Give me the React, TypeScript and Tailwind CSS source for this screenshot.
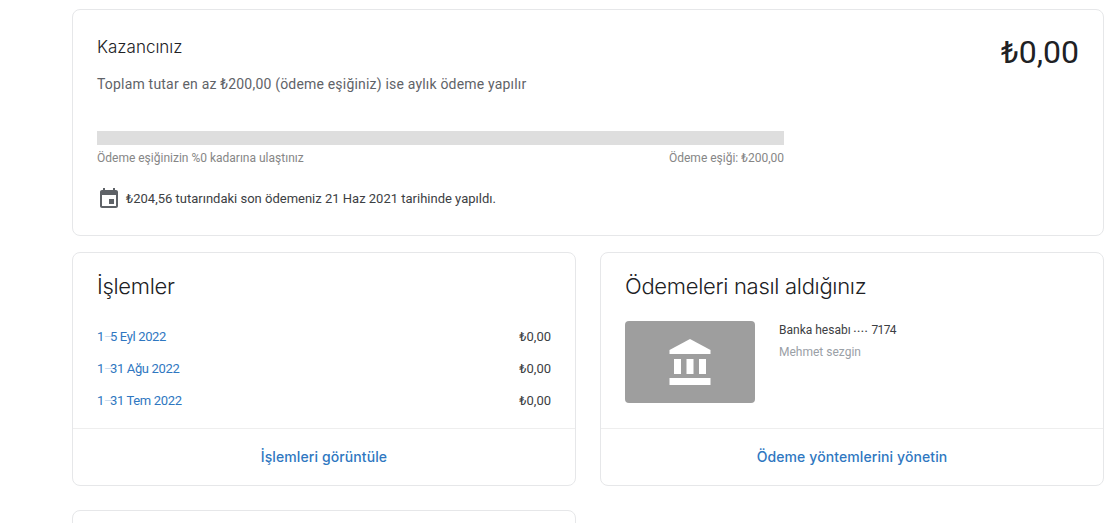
const rows = [
  { start: "1", rest: "5 Eyl 2022", amount: "₺0,00" },
  { start: "1", rest: "31 Ağu 2022", amount: "₺0,00" },
  { start: "1", rest: "31 Tem 2022", amount: "₺0,00" },
];

function CalendarIcon() {
  return (
    <svg viewBox="0 0 24 24" className="h-6 w-6 shrink-0" fill="#5f6368">
      <path d="M17 12h-5v5h5v-5zM16 1v2H8V1H6v2H5c-1.11 0-1.99.9-1.99 2L3 19c0 1.1.89 2 2 2h14c1.1 0 2-.9 2-2V5c0-1.1-.9-2-2-2h-1V1h-2zm3 18H5V8h14v11z" />
    </svg>
  );
}

function BankIcon() {
  return (
    <svg viewBox="0 0 42 46" className="h-[46px] w-[42px]" fill="#ffffff">
      <path d="M21 0 L41.5 11 V15 H0.5 V11 Z" />
      <rect x="5" y="20" width="7" height="15" />
      <rect x="17.5" y="20" width="7" height="15" />
      <rect x="30" y="20" width="7" height="15" />
      <rect x="0.5" y="39" width="41" height="7" />
    </svg>
  );
}

export default function App() {
  return (
    <div className="h-[523px] w-[1117px] overflow-hidden bg-white pt-[9px] pl-[72px] pr-[13px] font-['Roboto',sans-serif]">
      <section className="flex h-[227px] flex-col rounded-lg border border-[#e6e7e9] pt-[27px] pr-6 pl-6">
        <div className="flex items-start justify-between">
          <div>
            <h2 className="font-['Inter',sans-serif] text-[17px] leading-5 font-light text-[#202124]">Kazancınız</h2>
            <p className="mt-[17px] text-sm leading-5 tracking-[0.19px] text-[#5f6368]">
              Toplam tutar en az ₺200,00 (ödeme eşiğiniz) ise aylık ödeme yapılır
            </p>
          </div>
          <div className="-mt-[3px] text-[32px] leading-9 text-[#202124]">₺0,00</div>
        </div>
        <div className="mt-[37px] w-[687px]">
          <div className="h-3.5 bg-[#dedede]" />
          <div className="mt-[5px] flex justify-between text-xs leading-4 text-[#868686]">
            <span>Ödeme eşiğinizin %0 kadarına ulaştınız</span>
            <span>Ödeme eşiği: ₺200,00</span>
          </div>
        </div>
        <div className="mt-[21px] flex items-center gap-[5px] text-[13px] leading-5 text-[#3c4043]">
          <CalendarIcon />
          <span>₺204,56 tutarındaki son ödemeniz 21 Haz 2021 tarihinde yapıldı.</span>
        </div>
      </section>

      <div className="mt-4 grid grid-cols-2 gap-x-6 gap-y-6">
        <section className="flex h-[234px] flex-col rounded-lg border border-[#e6e7e9]">
          <div className="flex-1 px-6 pt-[19px]">
            <h2 className="font-['Inter',sans-serif] text-[22px] leading-7 font-light tracking-[-0.3px] text-[#202124]">İşlemler</h2>
            <ul className="mt-[21px]">
              {rows.map((row) => (
                <li key={row.rest} className="flex h-8 items-center justify-between text-[13px]">
                  <a className="tracking-[-0.35px] text-[#2f77c1]">
                    {row.start}
                    <span className="tracking-[-2.5px] text-[#c9dcee]">–</span>
                    {row.rest}
                  </a>
                  <span className="text-[#3c4043]">{row.amount}</span>
                </li>
              ))}
            </ul>
          </div>
          <div className="flex h-[57px] items-center justify-center border-t border-[#eeeeee] font-['Inter',sans-serif] text-sm font-medium tracking-[0.1px] text-[#2f77c1]">
            İşlemleri görüntüle
          </div>
        </section>

        <section className="flex h-[234px] flex-col rounded-lg border border-[#e6e7e9]">
          <div className="flex-1 px-6 pt-[19px]">
            <h2 className="font-['Inter',sans-serif] text-[22px] leading-7 font-light tracking-[-0.3px] text-[#202124]">Ödemeleri nasıl aldığınız</h2>
            <div className="mt-[21px] flex gap-6">
              <div className="flex h-[82px] w-[130px] items-center justify-center rounded bg-[#9e9e9e]">
                <BankIcon />
              </div>
              <div className="-mt-px text-xs leading-[21px]">
                <div className="text-[#3c4043]">
                  Banka hesabı <span className="text-[8px] tracking-[1px]">••••</span>{" "}
                  <span className="tracking-[-0.6px]">7174</span>
                </div>
                <div className="text-[#9aa0a6]">Mehmet sezgin</div>
              </div>
            </div>
          </div>
          <div className="flex h-[57px] items-center justify-center border-t border-[#eeeeee] font-['Inter',sans-serif] text-sm font-medium tracking-[0.1px] text-[#2f77c1]">
            Ödeme yöntemlerini yönetin
          </div>
        </section>

        <section className="h-[120px] rounded-lg border border-[#e6e7e9]" />
      </div>
    </div>
  );
}
